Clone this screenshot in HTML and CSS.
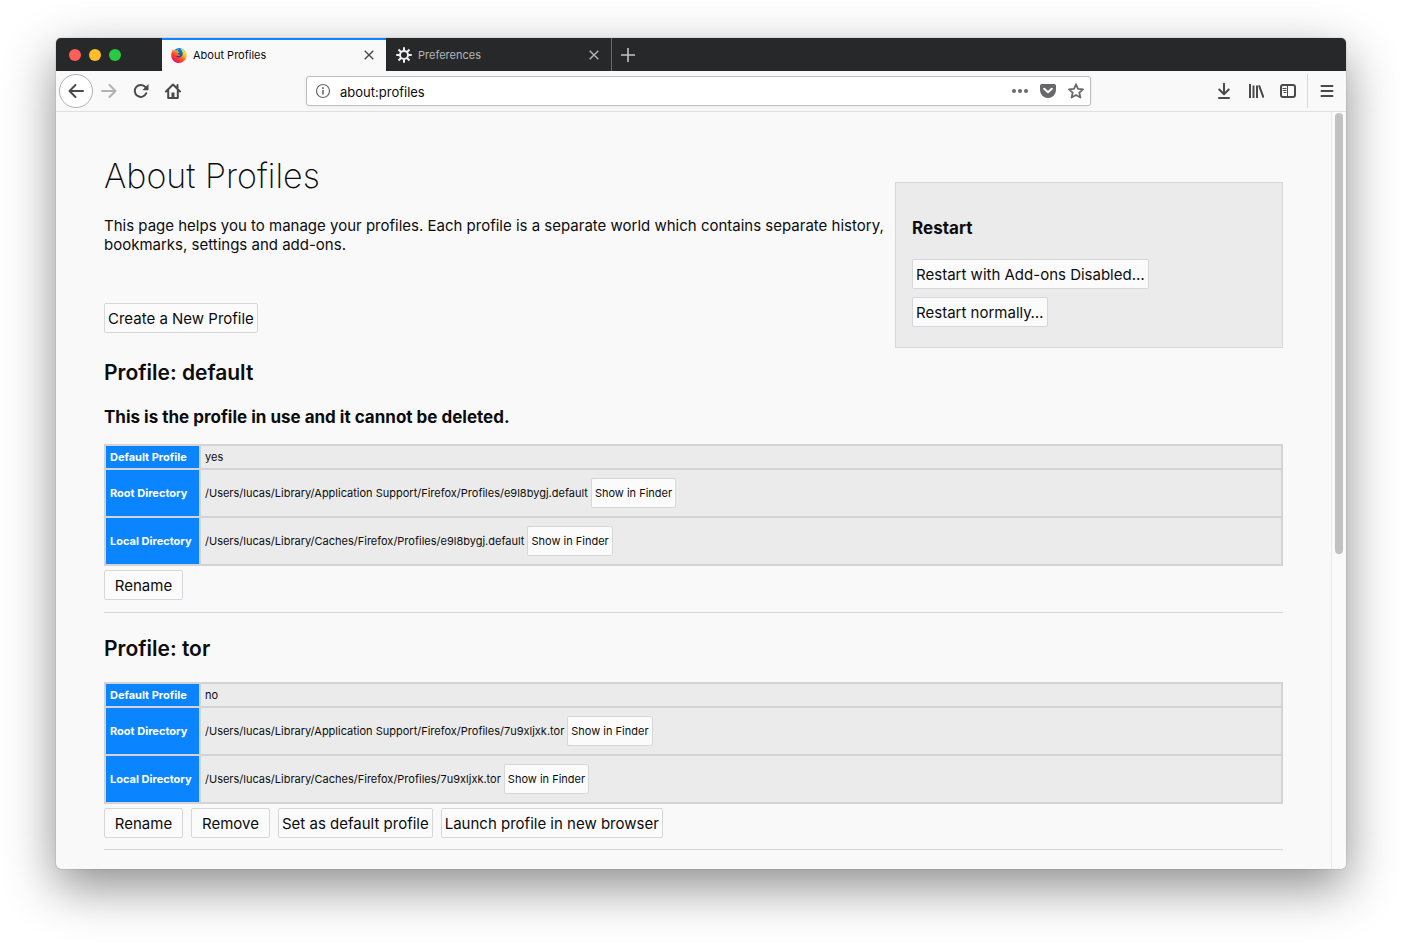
FILE: index.html
```
<!DOCTYPE html>
<html lang="en">
<head>
<meta charset="utf-8">
<title>About Profiles</title>
<link rel="stylesheet" href="styles.css">
</head>
<body>
<div class="window">
  <header class="tabbar">
    <div class="lights">
      <button class="light light-close" aria-label="Close window"></button>
      <button class="light light-min" aria-label="Minimize window"></button>
      <button class="light light-zoom" aria-label="Zoom window"></button>
    </div>
    <div class="tab tab-active">
      <svg class="icon" viewBox="0 0 16 16" aria-hidden="true">
        <defs>
          <linearGradient id="fox" x1="0.85" y1="0.1" x2="0.2" y2="0.9">
            <stop offset="0" stop-color="#fff44f"/><stop offset="0.3" stop-color="#ffb62b"/><stop offset="0.6" stop-color="#ff4f1f"/><stop offset="1" stop-color="#e8106a"/>
          </linearGradient>
          <linearGradient id="globe" x1="0.6" y1="0" x2="0.4" y2="1">
            <stop offset="0" stop-color="#0090e0"/><stop offset="1" stop-color="#2a2a8c"/>
          </linearGradient>
        </defs>
        <circle cx="8.3" cy="7.3" r="6.3" fill="url(#globe)"/>
        <path d="M1.7 2.2C2 3 2.500 3.400 3 3.600c1-.6 1.800-.5 2.600-.2C6 2.700 6.700 2.200 7.500 2c-.7.6-.9 1.300-.9 2 .1.600 1 .7 1.900.8-.1.800-.9 1.100-1.500 1.500-.4.300-.2.900-.3 1.200 1.300-.3 2.300.1 2.500.7-.8.100-1.200.9-2.300.8-.9-.1-1.400-.3-1.800-.1.900 1.500 3.200 2 4.900.9 2-1.400 2.200-3.900 1-5.900-.4-.7-1-1.200-1.300-2.300 2 .6 3.400 1.800 4 3.300.2-.4.200-.8.100-1.200C15.300 4.900 15.900 6.400 15.800 8.100 15.700 12.400 12.300 16 8 16 3.700 16 .2 12.600.2 8.200c0-1.500.4-2.800 1.100-3.900 0-.8.100-1.500.4-2.100z" fill="url(#fox)"/>
      </svg>
      <span class="tab-title">About Profiles</span>
      <button class="tab-close" aria-label="Close tab"><svg class="cross" viewBox="0 0 10 10"><path d="M.7.7l8.600 8.600M9.300.7L.7 9.300"/></svg></button>
    </div>
    <div class="tab">
      <svg class="icon gear" viewBox="0 0 16 16" aria-hidden="true"><circle cx="8" cy="8" r="4"/><path d="M8 .2v3.600M8 12.200v3.600M.2 8h3.600M12.200 8h3.600M2.500 2.500l2.500 2.500M11 11l2.500 2.500M13.500 2.500L11 5M5 11l-2.500 2.500"/></svg>
      <span class="tab-title">Preferences</span>
      <button class="tab-close" aria-label="Close tab"><svg class="cross" viewBox="0 0 10 10"><path d="M.7.7l8.600 8.600M9.300.7L.7 9.300"/></svg></button>
    </div>
    <button class="new-tab" aria-label="New tab"><svg viewBox="0 0 14 14"><path d="M7 0v14M0 7h14"/></svg></button>
  </header>

  <nav class="toolbar">
    <div class="nav-buttons">
      <button class="tool back" aria-label="Back"><svg class="icon line" viewBox="0 0 16 16"><path d="M15 8H1.500M7.500 2L1.500 8l6 6"/></svg></button>
      <button class="tool" aria-label="Forward" disabled><svg class="icon line" viewBox="0 0 16 16"><path d="M1 8h13.500M8.500 2l6 6-6 6"/></svg></button>
      <button class="tool" aria-label="Reload"><svg class="icon line" viewBox="0 0 16 16"><path d="M13.300 10.200A6 6 0 1 1 12.500 4.200"/><path class="solid" d="M15.500 1v6.200H9.300z"/></svg></button>
      <button class="tool" aria-label="Home"><svg class="icon line" viewBox="0 0 16 16"><path d="M1 8.500L8 1.500l7 7M3.200 7.500V15h9.600V7.500M12.500 2v3"/><path class="solid" d="M6.500 15V9.500h3V15z"/></svg></button>
    </div>
    <div class="urlbar">
      <svg class="icon info" viewBox="0 0 16 16" aria-hidden="true"><circle cx="8" cy="8" r="6.500"/><path d="M8 7v4.500M8 4.200v1.700"/></svg>
      <input class="url" type="text" value="about:profiles" aria-label="Address">
      <button class="url-action" aria-label="Page actions"><svg class="icon" viewBox="0 0 16 16"><circle cx="2" cy="8" r="2"/><circle cx="8" cy="8" r="2"/><circle cx="14" cy="8" r="2"/></svg></button>
      <button class="url-action" aria-label="Save to Pocket"><svg class="icon" viewBox="0 0 16 16"><path d="M1.800 1h12.400A1.800 1.800 0 0 1 16 2.800V7a8 8 0 0 1-16 0V2.800A1.800 1.800 0 0 1 1.800 1z"/><path class="chevron" d="M4.200 5.700L8 9.300l3.800-3.600"/></svg></button>
      <button class="url-action" aria-label="Bookmark"><svg class="icon star" viewBox="0 0 16 16"><path d="M8 1.300l2 4.500 5 .5-3.700 3.300 1.100 4.900L8 12l-4.400 2.500 1.100-4.900L1 6.300l5-.5z"/></svg></button>
    </div>
    <div class="right-tools">
      <button class="tool" aria-label="Downloads"><svg class="icon line" viewBox="0 0 16 16"><path d="M8 .8v10M3.300 6.500L8 11.200l4.700-4.700M3 15h10"/></svg></button>
      <button class="tool" aria-label="Library"><svg class="icon line" viewBox="0 0 16 16"><path class="butt" d="M2 1v14M5.500 2.500V15M9 2.500V15M11 2.300L15.500 14.600"/></svg></button>
      <button class="tool" aria-label="Sidebars"><svg class="icon line" viewBox="0 0 16 16"><rect x="1" y="2" width="14" height="12" rx="2"/><path class="thin" d="M7.500 2v12M3 5.500h3M3 7.500h3M4 9.500h2"/></svg></button>
      <span class="divider"></span>
      <button class="tool menu" aria-label="Menu"><svg class="icon line" viewBox="0 0 16 16"><path d="M2.500 3h11M2.500 8h11M2.500 13h11"/></svg></button>
    </div>
  </nav>

  <div class="viewport">
    <main class="page">
      <div class="top">
        <div class="intro">
          <h1>About Profiles</h1>
          <p>This page helps you to manage your profiles. Each profile is a separate world which contains separate history, bookmarks, settings and add-ons.</p>
          <button class="btn">Create a New Profile</button>
        </div>
        <aside class="restart">
          <h3>Restart</h3>
          <button class="btn">Restart with Add-ons Disabled…</button>
          <button class="btn">Restart normally…</button>
        </aside>
      </div>

      <section class="profile">
        <h2>Profile: default</h2>
        <h3>This is the profile in use and it cannot be deleted.</h3>
        <table>
          <tr><th scope="row">Default Profile</th><td>yes</td></tr>
          <tr><th scope="row">Root Directory</th><td><div class="path"><span>/Users/lucas/Library/Application Support/Firefox/Profiles/e9l8bygj.default</span><button class="btn btn-small">Show in Finder</button></div></td></tr>
          <tr><th scope="row">Local Directory</th><td><div class="path"><span>/Users/lucas/Library/Caches/Firefox/Profiles/e9l8bygj.default</span><button class="btn btn-small">Show in Finder</button></div></td></tr>
        </table>
        <div class="actions"><button class="btn">Rename</button></div>
      </section>

      <section class="profile">
        <h2>Profile: tor</h2>
        <table>
          <tr><th scope="row">Default Profile</th><td>no</td></tr>
          <tr><th scope="row">Root Directory</th><td><div class="path"><span>/Users/lucas/Library/Application Support/Firefox/Profiles/7u9xljxk.tor</span><button class="btn btn-small">Show in Finder</button></div></td></tr>
          <tr><th scope="row">Local Directory</th><td><div class="path"><span>/Users/lucas/Library/Caches/Firefox/Profiles/7u9xljxk.tor</span><button class="btn btn-small">Show in Finder</button></div></td></tr>
        </table>
        <div class="actions"><button class="btn">Rename</button><button class="btn">Remove</button><button class="btn">Set as default profile</button><button class="btn">Launch profile in new browser</button></div>
      </section>
    </main>
    <div class="scrollbar"><div class="thumb"></div></div>
  </div>
</div>
</body>
</html>
```
FILE: styles.css
```
* { box-sizing: border-box; }

body {
  margin: 0;
  min-height: 100vh;
  padding: 38px 56px 74px;
  display: flex;
  background: #fff;
  color: #0c0c0d;
  font-family: Inter, "Liberation Sans", sans-serif;
  font-size: 15px;
  line-height: 19px;
}

button, input { font: inherit; color: inherit; margin: 0; }
button { border: 0; padding: 0; background: none; }

.window {
  flex: 1;
  min-width: 0;
  display: flex;
  flex-direction: column;
  border-radius: 5px;
  overflow: hidden;
  background: #f9f9fa;
  box-shadow: 0 0 1px rgba(0, 0, 0, .6), 0 18px 50px rgba(0, 0, 0, .45);
}

.icon { width: 16px; height: 16px; flex: none; display: block; }

/* Tab strip */
.tabbar { display: flex; height: 33px; background: #27282a; }
.lights { display: flex; align-items: center; gap: 8px; width: 106px; padding-left: 13px; }
.light { width: 12px; height: 12px; border-radius: 50%; }
.light-close { background: #ff5f57; }
.light-min { background: #ffbd2e; }
.light-zoom { background: #28ca42; }
.tab {
  display: flex;
  align-items: center;
  width: 226px;
  padding: 1px 12px 0 10px;
  border-right: 1px solid #6a6b6c;
  color: #b6b6b7;
  font-size: 11px;
}
.tab-active {
  width: 224px;
  padding: 1px 12px 0 9px;
  border-right: 0;
  box-shadow: inset 0 2px #0a84ff;
  background: #f9f9fa;
  color: #0c0c0d;
}
.tab-title { flex: 1; padding-left: 6px; }
.cross { display: block; width: 10px; height: 10px; stroke: #b6b6b7; stroke-width: 1.400; }
.tab-active .cross { stroke: #4a4a4b; }
.gear { fill: none; stroke: #f0f0f1; stroke-width: 2; }
.new-tab { padding: 0 9px; }
.new-tab svg { display: block; width: 14px; height: 14px; stroke: #c4c4c5; stroke-width: 1.600; }

/* Toolbar */
.toolbar {
  display: flex;
  align-items: center;
  justify-content: space-between;
  height: 41px;
  padding: 0 3px;
  border-bottom: 1px solid #e0e0e1;
}
.nav-buttons, .right-tools { display: flex; align-items: center; }
.tool { width: 32px; height: 32px; display: grid; place-items: center; }
.tool:disabled { opacity: .4; }
.back { width: 34px; height: 34px; border: 1px solid #b1b1b1; border-radius: 50%; background: #fff; }
.line { fill: none; stroke: #4a4a4b; stroke-width: 2; stroke-linecap: round; stroke-linejoin: round; }
.line .solid { fill: #4a4a4b; stroke: none; }
.line .butt { stroke-linecap: butt; }
.line .thin { stroke-width: 1; }
.divider { width: 1px; height: 34px; margin: 0 3px; background: #d7d7d8; }
.urlbar {
  display: flex;
  align-items: center;
  flex: 0 1 785px;
  height: 30px;
  padding: 0 6px 0 8px;
  gap: 12px;
  border: 1px solid #bdbdbe;
  border-radius: 3px;
  background: #fff;
  box-shadow: 0 1px 4px rgba(0, 0, 0, .06);
}
.info { fill: none; stroke: #6a6a6b; stroke-width: 1.200; }
.info path { stroke-width: 1.600; }
.url { flex: 1; min-width: 0; padding: 2px 0 0; margin-left: -3px; border: 0; outline: 0; background: none; font-size: 13px; }
.url-action { fill: #68686a; }
.chevron { fill: none; stroke: #fff; stroke-width: 2; stroke-linecap: round; stroke-linejoin: round; }
.star { fill: none; stroke: #68686a; stroke-width: 1.800; stroke-linejoin: round; }

/* Page */
.viewport { flex: 1; display: flex; }
.page { flex: 1; min-width: 0; padding: 40px 48px 19px; }
.top { display: flex; align-items: flex-start; gap: 8px; }
.intro { flex: 1; min-width: 0; }
h1, h2, h3, p { margin: 0; }
h1 { font-size: 34px; line-height: 48px; font-weight: 200; }
.intro p { margin: 16px 0 49px; }
h2 { font-size: 21px; line-height: 30px; font-weight: 600; }
h3 { font-size: 17px; line-height: 22px; font-weight: 700; }

.btn {
  height: 30px;
  min-width: 79px;
  padding: 0 3px;
  border: 1px solid #d7d7db;
  border-radius: 2px;
  background: #fbfbfb;
  white-space: nowrap;
}
.btn-small { font-size: 11px; }

.restart {
  display: flex;
  flex-direction: column;
  align-items: flex-start;
  gap: 8px;
  width: 32.900%;
  margin-top: 30px;
  padding: 34px 16px 20px;
  border: 1px solid #d7d7db;
  background: #ebebeb;
}
.restart h3 { margin-bottom: 12px; }

.profile { border-bottom: 1px solid #d7d7db; padding: 21px 0 12px; }
.profile:last-child { padding-bottom: 11px; }
.top + .profile { padding-top: 10px; }
.profile h3 { margin-top: 18px; }
table { width: 100%; margin-top: 16px; border-collapse: collapse; font-size: 11px; line-height: 14px; }
.profile h2 + table { margin-top: 18px; }
th, td { height: 24px; padding: 4px; border: 2px solid #d3d3d5; text-align: left; }
th { width: 95px; background: #0a84ff; color: #fff; font-weight: 700; white-space: nowrap; }
td { background: #ebebeb; }
.path { display: flex; align-items: center; gap: 3px; padding: 4px 0; }
.actions { display: flex; gap: 8px; margin-top: 4px; }

/* Scrollbar */
.scrollbar { width: 15px; padding: 1px 3px; border-left: 1px solid #e8e8e8; background: #fafafa; }
.thumb { width: 8px; height: 58.400%; border-radius: 4px; background: #c1c1c1; }
```
